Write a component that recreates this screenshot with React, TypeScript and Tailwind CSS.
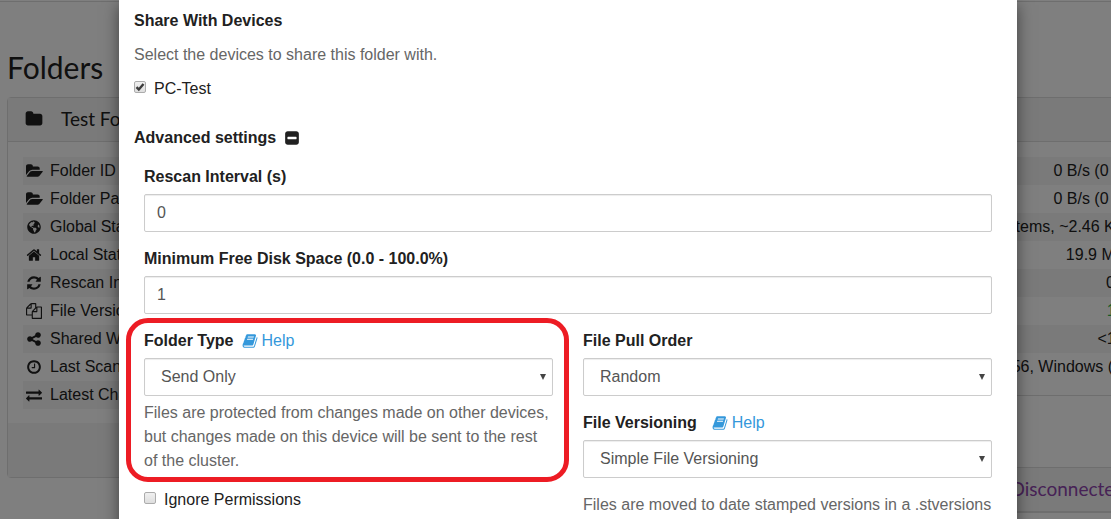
import React from "react";
import { FaGlobeAmericas } from "react-icons/fa";

const paths = {
  folder:
    "M1728 608v704q0 92-66 158t-158 66h-1216q-92 0-158-66t-66-158v-960q0-92 66-158t158-66h320q92 0 158 66t66 158v32h672q92 0 158 66t66 158z",
  folderOpen:
    "M1879 952q0 31-31 66l-336 396q-43 51-120.5 86.5t-143.5 35.5h-1088q-34 0-60.5-13t-26.5-43q0-31 31-66l336-396q43-51 120.5-86.5t143.5-35.5h1088q34 0 60.5 13t26.5 43zm-343-344v160h-832q-94 0-197 47.5t-164 119.5l-337 396-5 6q0-4-.5-12.5t-.5-12.5v-960q0-92 66-158t158-66h320q92 0 158 66t66 158v32h544q92 0 158 66t66 158z",
  home:
    "M1472 992v480q0 26-19 45t-45 19h-384v-384h-256v384h-384q-26 0-45-19t-19-45v-480q0-1 .5-3t.5-3l575-474 575 474q1 2 1 6zm223-69l-62 74q-8 9-21 11h-3q-13 0-21-7l-692-577-692 577q-12 8-24 7-13-2-21-11l-62-74q-8-10-7-23.5t11-21.500l719-599q32-26 76-26t76 26l244 204v-195q0-14 9-23t23-9h192q14 0 23 9t9 23v408l219 182q10 8 11 21.500t-7 23.500z",
  refresh:
    "M1639 1056q0 5-1 7-64 268-268 434.500t-478 166.500q-146 0-282.500-55t-243.500-157l-129 129q-19 19-45 19t-45-19-19-45v-448q0-26 19-45t45-19h448q26 0 45 19t19 45-19 45l-137 137q71 66 161 102t187 36q134 0 250-65t186-179q11-17 53-117 8-23 30-23h192q13 0 22.500 9.500t9.500 22.500zm25-800v448q0 26-19 45t-45 19h-448q-26 0-45-19t-19-45 19-45l138-138q-148-137-349-137-134 0-250 65t-186 179q-11 17-53 117-8 23-30 23h-199q-13 0-22.500-9.500t-9.500-22.500v-7q65-268 270-434.500t480-166.500q146 0 284 55.500t245 156.500l130-129q19-19 45-19t45 19 19 45z",
  files:
    "M1696 384q40 0 68 28t28 68v1216q0 40-28 68t-68 28h-960q-40 0-68-28t-28-68v-288h-544q-40 0-68-28t-28-68v-672q0-40 20-88t48-76l408-408q28-28 76-48t88-20h416q40 0 68 28t28 68v328q68-40 128-40h416zm-544 213l-299 299h299v-299zm-640-384l-299 299h299v-299zm196 647l316-316v-416h-384v416q0 40-28 68t-68 28h-416v640h512v-256q0-40 20-88t48-76zm956 804v-1152h-384v416q0 40-28 68t-68 28h-416v640h896z",
  share:
    "M1344 1024q133 0 226.500 93.500t93.500 226.500-93.500 226.500-226.500 93.500-226.500-93.500-93.500-226.500q0-12 2-34l-360-180q-92 86-218 86-133 0-226.500-93.500t-93.500-226.500 93.500-226.500 226.500-93.500q126 0 218 86l360-180q-2-22-2-34 0-133 93.500-226.500t226.500-93.500 226.500 93.500 93.500 226.500-93.500 226.500-226.500 93.500q-126 0-218-86l-360 180q2 22 2 34t-2 34l360 180q92-86 218-86z",
  clock:
    "M1024 544v448q0 14-9 23t-23 9h-320q-14 0-23-9t-9-23v-64q0-14 9-23t23-9h224v-352q0-14 9-23t23-9h64q14 0 23 9t9 23zm416 352q0-148-73-273t-198-198-273-73-273 73-198 198-73 273 73 273 198 198 273 73 273-73 198-198 73-273zm224 0q0 209-103 385.500t-279.500 279.500-385.500 103-385.500-103-279.500-279.500-103-385.500 103-385.500 279.500-279.500 385.500-103 385.500 103 279.500 279.500 103 385.500z",
  exchange:
    "M1792 1184v192q0 13-9.500 22.500t-22.500 9.500h-1376v192q0 13-9.500 22.500t-22.500 9.500q-12 0-24-10l-319-320q-9-9-9-22 0-14 9-23l320-320q9-9 23-9 13 0 22.500 9.500t9.500 22.500v192h1376q13 0 22.500 9.500t9.500 22.500zm0-544q0 14-9 23l-320 320q-9 9-23 9-13 0-22.500-9.500t-9.500-22.500v-192h-1376q-13 0-22.500-9.500t-9.500-22.500v-192q0-13 9.500-22.500t22.500-9.500h1376v-192q0-14 9-23t23-9q12 0 24 10l319 319q9 9 9 23z",
  book:
    "M1703 478q40 57 18 129l-275 906q-19 64-76.500 107.500t-122.500 43.500h-923q-77 0-148.500-53.500t-99.500-131.500q-24-67-2-127 0-4 3-27t4-37q1-8-3-21.500t-3-19.500q2-11 8-21t16.500-23.500 16.500-23.500q23-38 45-91.500t30-91.500q3-10 .5-30t-.5-28q3-11 17-28t17-23q21-36 42-92t25-90q1-9-2.500-32t.5-28q4-13 22-30.500t22-22.500q19-26 42.500-84.500t27.500-96.500q1-8-3-25.500t-2-26.500q2-8 9-18t18-23 17-21q8-12 16.500-30.500t15-35 16-36 19.500-32 26.500-23.500 36-11.500 47.500 5.500l-1 3q38-9 51-9h761q74 0 114 56t18 130l-274 906q-36 119-71.500 153.500t-128.500 34.500h-869q-27 0-38 15-11 16-1 43 24 70 144 70h923q29 0 56-15.500t35-41.500l300-987q7-22 5-57 38 15 59 43zm-1064 2q-4 13 2 22.500t20 9.500h608q13 0 25.500-9.500t16.500-22.500l21-64q4-13-2-22.500t-20-9.500h-608q-13 0-25.500 9.500t-16.500 22.500zm-83 256q-4 13 2 22.500t20 9.500h608q13 0 25.500-9.500t16.500-22.500l21-64q4-13-2-22.500t-20-9.500h-608q-13 0-25.500 9.500t-16.500 22.500z",
  minusSquare:
    "M1408 960v-128q0-26-19-45t-45-19h-896q-26 0-45 19t-19 45v128q0 26 19 45t45 19h896q26 0 45-19t19-45zm256-544v960q0 119-84.500 203.500t-203.500 84.500h-960q-119 0-203.500-84.500t-84.500-203.500v-960q0-119 84.500-203.500t203.500-84.500h960q119 0 203.500 84.500t84.500 203.500z",
};

type IconName = keyof typeof paths;

function Icon({ name, className = "size-4" }: { name: IconName; className?: string }) {
  return (
    <svg
      viewBox="0 0 1792 1792"
      fill="currentColor"
      overflow="visible"
      aria-hidden="true"
      className={`shrink-0 ${className}`}
    >
      <path d={paths[name]} />
    </svg>
  );
}

const folderRows: { icon: IconName | "globe"; label: string }[] = [
  { icon: "folderOpen", label: "Folder ID" },
  { icon: "folderOpen", label: "Folder Path" },
  { icon: "globe", label: "Global State" },
  { icon: "home", label: "Local State" },
  { icon: "refresh", label: "Rescan Interval" },
  { icon: "files", label: "File Versioning" },
  { icon: "share", label: "Shared With" },
  { icon: "clock", label: "Last Scan" },
  { icon: "exchange", label: "Latest Change" },
];

const deviceRows = [
  { value: "0 B/s (0 B)" },
  { value: "0 B/s (0 B)" },
  { value: "items, ~2.46 KiB" },
  { value: "19.9 MiB" },
  { value: "0%" },
  { value: "1/1", className: "text-[#29b74e]" },
  { value: "<1m" },
  { value: "v0.14.56, Windows (…" },
];

function Dashboard() {
  return (
    <div className="min-h-screen bg-white text-[#212121]">
      <div className="h-0.5 border-b border-[#dddddd]" />
      <div className="-mr-[39px] grid grid-cols-2 gap-8 pl-[7px]">
        <section>
          <h3 className="mt-12 mb-3 font-[Lato,sans-serif] text-[30px] leading-[35px]">Folders</h3>
          <div className="rounded-sm border border-[#dddddd]">
            <button
              type="button"
              className="flex h-11 w-full items-center gap-[18px] border-b border-[#dddddd] bg-[#f5f5f5] px-[17px] pb-0.5 font-[Lato,sans-serif] text-[19px]"
            >
              <Icon name="folder" className="size-[18px]" />
              Test Folder
            </button>
            <div className="px-[15px] pt-[15px] pb-[14px]">
              <table className="w-full">
                <tbody>
                  {folderRows.map((row) => (
                    <tr key={row.label} className="h-7 odd:bg-[#f5f5f5]">
                      <th className="p-0 text-left font-normal">
                        <span className="flex items-center gap-2 pl-[3px]">
                          {row.icon === "globe" ? (
                            <FaGlobeAmericas className="size-4 p-px" aria-hidden="true" />
                          ) : (
                            <Icon name={row.icon} />
                          )}
                          {row.label}
                        </span>
                      </th>
                    </tr>
                  ))}
                </tbody>
              </table>
            </div>
            <div className="h-[54px] bg-[#f5f5f5]" />
          </div>
        </section>
        <section className="pt-[95px]">
          <div className="rounded-sm border border-[#dddddd]">
            <div className="h-11 border-b border-[#dddddd] bg-[#f5f5f5]" />
            <div className="px-[15px] pt-[15px] pb-[14px]">
              <table className="w-full">
                <tbody>
                  {deviceRows.map((row, i) => (
                    <tr key={i} className="h-7 odd:bg-[#f5f5f5]">
                      <td className={`px-[5px] py-0 text-right ${row.className ?? ""}`}>{row.value}</td>
                    </tr>
                  ))}
                </tbody>
              </table>
            </div>
          </div>
          <div className="mt-[71px] rounded-sm border border-[#dddddd]">
            <div className="flex h-11 items-center justify-end border-b border-[#dddddd] bg-[#f5f5f5] px-6 pb-0.5 font-[Lato,sans-serif] text-[19px] text-[#8e44ad]">
              Disconnected
            </div>
          </div>
        </section>
      </div>
    </div>
  );
}

function Checkbox({ label, defaultChecked }: { label: string; defaultChecked?: boolean }) {
  return (
    <label className="flex items-center gap-2">
      <span className="relative mb-1 flex size-3">
        <input
          type="checkbox"
          defaultChecked={defaultChecked}
          className="peer size-3 appearance-none rounded-[2px] border border-[#acacac] bg-linear-to-b from-[#f0f0f0] to-[#dedede]"
        />
        <svg
          viewBox="0 0 12 12"
          aria-hidden="true"
          className="pointer-events-none absolute inset-0 hidden size-3 peer-checked:block"
        >
          <path d="M2.500 6.200 4.800 8.500 9.500 3" fill="none" stroke="#3c3c3c" strokeWidth="2.400" />
        </svg>
      </span>
      {label}
    </label>
  );
}

function TextField({ id, label, value }: { id: string; label: string; value: string }) {
  return (
    <div className="mb-[15px]">
      <label htmlFor={id} className="mb-[5px] block font-bold">
        {label}
      </label>
      <input
        id={id}
        type="text"
        defaultValue={value}
        className="block h-[38px] w-full rounded-[2px] border border-[#cccccc] bg-white px-3 text-[#555555] shadow-[inset_0_1px_1px_rgba(0,0,0,0.075)]"
      />
    </div>
  );
}

function SelectField({
  id,
  label,
  value,
  help,
}: {
  id: string;
  label: string;
  value: string;
  help?: string;
}) {
  return (
    <div>
      <div className="mb-[5px] flex items-center">
        <label htmlFor={id} className="font-bold">
          {label}
        </label>
        {help && (
          <a href="#help" className={`flex items-center gap-1 text-[#3498db] ${help}`}>
            <Icon name="book" />
            Help
          </a>
        )}
      </div>
      <div className="relative">
        <select
          id={id}
          defaultValue={value}
          className="block h-[38px] w-full appearance-none rounded-[2px] border border-[#cccccc] bg-white px-4 text-[#555555] shadow-[inset_0_1px_1px_rgba(0,0,0,0.075)]"
        >
          <option>{value}</option>
        </select>
        <svg
          viewBox="0 0 6 6"
          aria-hidden="true"
          className="pointer-events-none absolute top-4 right-[7px] size-1.5"
        >
          <path d="M0 0h6L3 6z" fill="#444444" />
        </svg>
      </div>
    </div>
  );
}

function FolderDialog() {
  return (
    <div
      role="dialog"
      aria-label="Edit Folder"
      className="mr-[94px] ml-[119px] min-h-full bg-white px-[15px] pt-[9px] text-[#212121] shadow-[0_5px_15px_rgba(0,0,0,0.5)]"
    >
      <h4 className="font-bold">Share With Devices</h4>
      <p className="my-2.5 text-[#666666]">Select the devices to share this folder with.</p>
      <Checkbox label="PC-Test" defaultChecked />
      <button type="button" className="mt-[25px] flex items-center gap-2 font-bold">
        Advanced settings
        <Icon name="minusSquare" />
      </button>
      <div className="mt-[15px] px-2.5">
        <TextField id="rescan" label="Rescan Interval (s)" value="0" />
        <TextField id="min-free" label="Minimum Free Disk Space (0.0 - 100.0%)" value="1" />
        <div className="grid grid-cols-2 gap-[30px]">
          <div>
            <div className="relative">
              <SelectField id="folder-type" label="Folder Type" value="Send Only" help="ml-2" />
              <p className="mt-[5px] text-[#666666]">
                Files are protected from changes made on other devices, but changes made on this device
                will be sent to the rest of the cluster.
              </p>
              <div className="pointer-events-none absolute -top-[11px] -right-4 -bottom-[9px] -left-[18px] rounded-[22px] border-[5px] border-[#ed1c24]" />
            </div>
            <div className="mt-[15px]">
              <Checkbox label="Ignore Permissions" />
            </div>
          </div>
          <div>
            <SelectField id="pull-order" label="File Pull Order" value="Random" />
            <div className="mt-[15px]">
              <SelectField
                id="versioning"
                label="File Versioning"
                value="Simple File Versioning"
                help="ml-[15px]"
              />
            </div>
            <p className="mt-[15px] text-[#666666]">
              Files are moved to date stamped versions in a .stversions directory when replaced or
              deleted by Syncthing.
            </p>
          </div>
        </div>
      </div>
    </div>
  );
}

export default function App() {
  return (
    <main className="relative h-screen overflow-hidden font-['Liberation_Sans',Arial,sans-serif] text-base leading-6">
      <Dashboard />
      <div className="absolute inset-0 overflow-hidden bg-black/50">
        <FolderDialog />
      </div>
    </main>
  );
}
